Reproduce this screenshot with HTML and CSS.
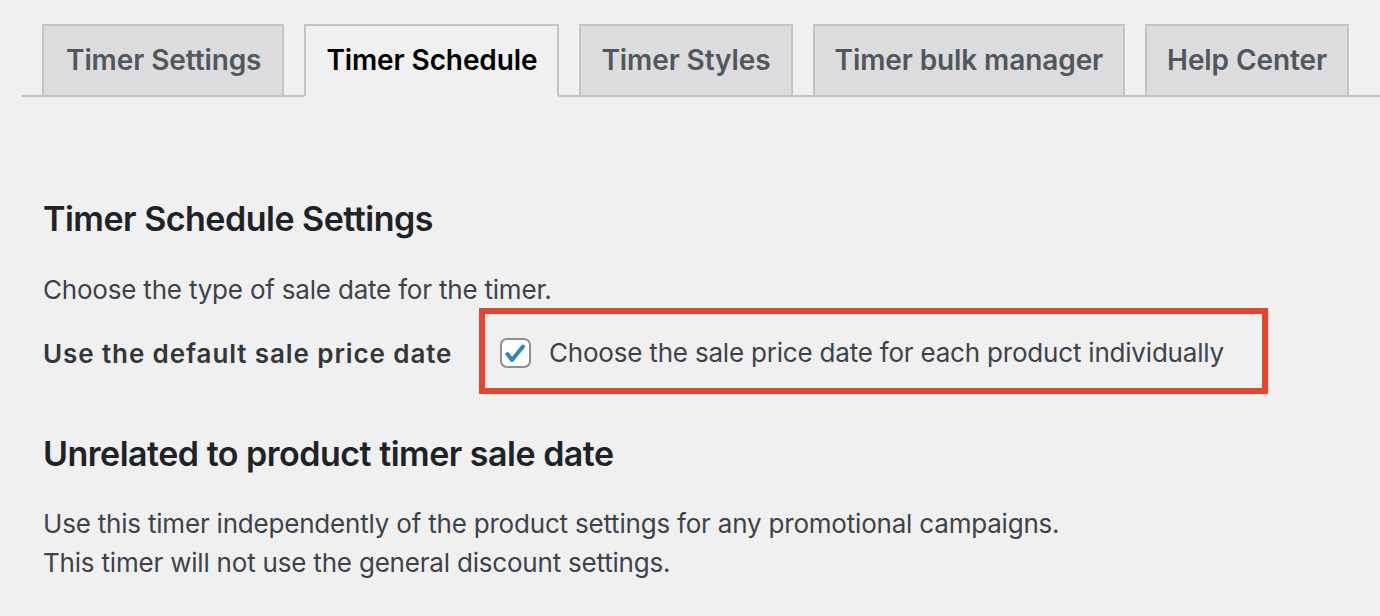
FILE: index.html
```html
<!DOCTYPE html>
<html lang="en">
<head>
<meta charset="utf-8">
<title>Timer Schedule</title>
<link rel="stylesheet" href="styles.css">
</head>
<body>
<div class="wrap">
  <nav class="nav-tabs">
    <a class="nav-tab">Timer Settings</a>
    <a class="nav-tab active">Timer Schedule</a>
    <a class="nav-tab">Timer Styles</a>
    <a class="nav-tab">Timer bulk manager</a>
    <a class="nav-tab">Help Center</a>
  </nav>
  <div class="content">
    <h2 class="title first">Timer Schedule Settings</h2>
    <p class="desc">Choose the type of sale date for the timer.</p>
    <div class="row">
      <div class="row-label">Use the default sale price date</div>
      <label class="highlight">
        <span class="checkbox">
          <svg viewBox="0 0 30 30" width="30" height="30" aria-hidden="true">
            <polyline points="7.5,16 12,22 23,8.5" fill="none" stroke="#3582c4" stroke-width="4" stroke-linecap="round" stroke-linejoin="round"/>
          </svg>
        </span>
        <span class="check-text">Choose the sale price date for each product individually</span>
      </label>
    </div>
    <h2 class="title second">Unrelated to product timer sale date</h2>
    <p class="desc two">Use this timer independently of the product settings for any promotional campaigns.<br>This timer will not use the general discount settings.</p>
  </div>
</div>
</body>
</html>
```

FILE: styles.css
```css
html, body {
  margin: 0;
  padding: 0;
  background: #f0f0f1;
  font-family: Inter, "Noto Sans", "Liberation Sans", sans-serif;
  color: #3c434a;
}

.wrap {
  padding-left: 22px;
}

.nav-tabs {
  display: flex;
  gap: 20px;
  margin-top: 24px;
  padding-left: 20px;
  border-bottom: 2px solid #c3c4c7;
}

.nav-tab {
  display: block;
  box-sizing: border-box;
  height: 73px;
  margin-bottom: -2px;
  padding: 0 20px;
  border: 2px solid #c3c4c7;
  background: #dcdcde;
  color: #50575e;
  font-size: 28px;
  font-weight: 600;
  line-height: 69px;
  letter-spacing: -0.1px;
  white-space: nowrap;
}

.nav-tab:first-child {
  padding: 0 21px 0 22px;
}

.nav-tab.active {
  background: #f0f0f1;
  color: #000;
  border-bottom-color: #f0f0f1;
}

.content {
  padding-left: 21px;
}

.title {
  margin: 0;
  font-size: 34px;
  line-height: 41px;
  font-weight: 600;
  letter-spacing: -0.5px;
  color: #1d2327;
}

.title.first {
  margin-top: 101px;
}

.title.second {
  margin-top: 39px;
}

.desc {
  margin: 31px 0 0;
  font-size: 26px;
  line-height: 39px;
  letter-spacing: -0.2px;
}

.desc.two {
  margin-top: 30px;
}

.row {
  display: flex;
  align-items: center;
  margin-top: -1px;
}

.row-label {
  width: 436px;
  flex-shrink: 0;
  margin-top: 4px;
  font-size: 26px;
  line-height: 39px;
  font-weight: 600;
  letter-spacing: 0.9px;
  color: #32373c;
}

.highlight {
  display: flex;
  align-items: center;
  width: 789px;
  box-sizing: border-box;
  padding: 19px 0 16px 15px;
  border: 6px solid #e8432b;
}

.checkbox {
  display: block;
  box-sizing: border-box;
  width: 31px;
  height: 30px;
  margin-right: 18px;
  border: 2px solid #8c8f94;
  border-radius: 7px;
  background: #fff;
}

.checkbox svg {
  display: block;
  margin: -2px 0 0 -2px;
}

.check-text {
  font-size: 26px;
  line-height: 39px;
  letter-spacing: -0.2px;
  color: #3c434a;
  white-space: nowrap;
}
```
